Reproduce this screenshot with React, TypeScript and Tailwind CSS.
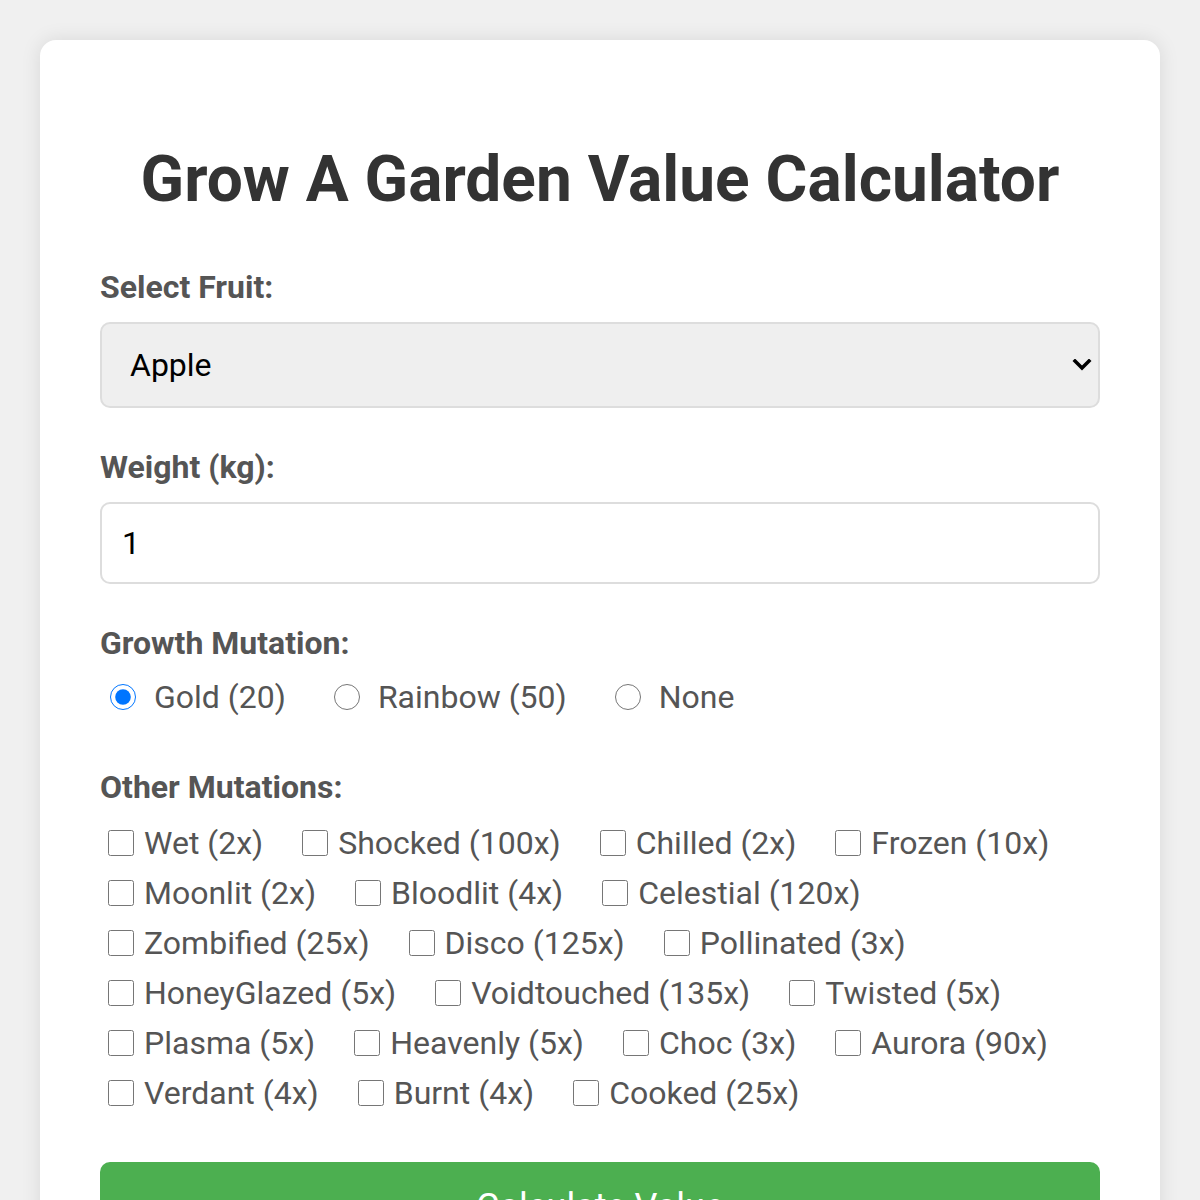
import { useState } from "react";

const growth = [
  { key: "gold", label: "Gold (20)" },
  { key: "rainbow", label: "Rainbow (50)" },
  { key: "none", label: "None" },
];

const others = [
  "Wet (2x)",
  "Shocked (100x)",
  "Chilled (2x)",
  "Frozen (10x)",
  "Moonlit (2x)",
  "Bloodlit (4x)",
  "Celestial (120x)",
  "Zombified (25x)",
  "Disco (125x)",
  "Pollinated (3x)",
  "HoneyGlazed (5x)",
  "Voidtouched (135x)",
  "Twisted (5x)",
  "Plasma (5x)",
  "Heavenly (5x)",
  "Choc (3x)",
  "Aurora (90x)",
  "Verdant (4x)",
  "Burnt (4x)",
  "Cooked (25x)",
];

export default function App() {
  const [fruit, setFruit] = useState("Apple");
  const [weight, setWeight] = useState("1");
  const [mutation, setMutation] = useState("gold");
  const [checked, setChecked] = useState<Record<string, boolean>>({});

  return (
    <div
      className="min-h-[1200px] bg-[#f0f0f0] px-10 pt-10"
      style={{ fontFamily: "Roboto, 'Liberation Sans', sans-serif" }}
    >
      <div className="rounded-2xl bg-white px-[60px] pt-[60px] pb-10 shadow-[0_0_20px_rgba(0,0,0,0.1)]">
        <h1 className="mt-[42px] text-center text-[64px] leading-[76px] font-bold text-[#333]">
          Grow A Garden Value Calculator
        </h1>

        <label className="mt-[50px] mb-4 block text-[32px] leading-[38px] font-bold text-[#555]">
          Select Fruit:
        </label>
        <div className="relative">
          <select
            value={fruit}
            onChange={(e) => setFruit(e.target.value)}
            className="h-[86px] w-full appearance-none rounded-[10px] border-2 border-[#ddd] bg-[#efefef] px-[28px] text-[32px] text-black outline-none"
          >
            <option>Apple</option>
            <option>Carrot</option>
            <option>Strawberry</option>
            <option>Blueberry</option>
          </select>
          <svg
            className="pointer-events-none absolute top-1/2 right-[8px] -mt-[6px] h-[12px] w-[20px]"
            viewBox="0 0 20 12"
          >
            <path
              d="M3 2 L10 9 L17 2"
              fill="none"
              stroke="#000"
              strokeWidth="3.5"
              strokeLinecap="square"
            />
          </svg>
        </div>

        <label className="mt-10 mb-4 block text-[32px] leading-[38px] font-bold text-[#555]">
          Weight (kg):
        </label>
        <input
          type="number"
          value={weight}
          onChange={(e) => setWeight(e.target.value)}
          className="h-[82px] w-full rounded-[10px] border-2 border-[#ddd] bg-white px-[20px] text-[32px] text-black outline-none [appearance:textfield]"
        />

        <label className="mt-10 mb-4 block text-[32px] leading-[38px] font-bold text-[#555]">
          Growth Mutation:
        </label>
        <div className="flex items-center">
          {growth.map((g) => (
            <label
              key={g.key}
              className="mr-[38px] flex items-center text-[32px] leading-[38px] text-[#555]"
            >
              <input
                type="radio"
                name="growth"
                checked={mutation === g.key}
                onChange={() => setMutation(g.key)}
                className="mr-[18px] ml-[10px] h-[26px] w-[26px] accent-[#0075ff]"
              />
              {g.label}
            </label>
          ))}
        </div>

        <label className="mt-[52px] mb-3 block text-[32px] leading-[38px] font-bold text-[#555]">
          Other Mutations:
        </label>
        <div className="flex flex-wrap">
          {others.map((o) => (
            <label
              key={o}
              className="mr-[31px] flex h-[50px] items-center text-[32px] text-[#555]"
            >
              <input
                type="checkbox"
                checked={!!checked[o]}
                onChange={() =>
                  setChecked((prev) => ({ ...prev, [o]: !prev[o] }))
                }
                className="mr-[10px] ml-[8px] h-[26px] w-[26px]"
              />
              {o}
            </label>
          ))}
        </div>

        <button
          type="button"
          className="mt-11 h-[90px] w-full rounded-[10px] bg-[#4caf50] text-[36px] text-white"
        >
          Calculate Value
        </button>
      </div>
    </div>
  );
}
